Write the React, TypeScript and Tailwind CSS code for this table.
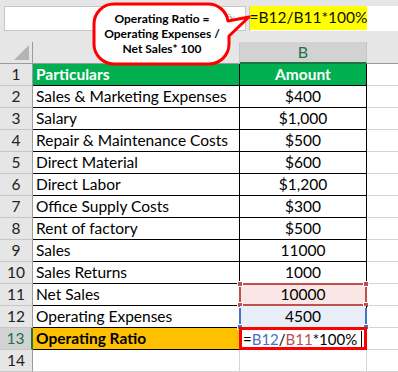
import React from "react";

const rows: { n: number; a: string; b: string }[] = [
  { n: 2, a: "Sales & Marketing Expenses", b: "$400" },
  { n: 3, a: "Salary", b: "$1,000" },
  { n: 4, a: "Repair & Maintenance Costs", b: "$500" },
  { n: 5, a: "Direct Material", b: "$600" },
  { n: 6, a: "Direct Labor", b: "$1,200" },
  { n: 7, a: "Office Supply Costs", b: "$300" },
  { n: 8, a: "Rent of factory", b: "$500" },
  { n: 9, a: "Sales", b: "11000" },
  { n: 10, a: "Sales Returns", b: "1000" },
];

function RowHead({ n, active }: { n: number; active?: boolean }) {
  return (
    <div
      className={
        active
          ? "w-[33px] shrink-0 flex items-center justify-center bg-[#d2d2d2] text-[#217346] border-r-2 border-r-[#217346] border-b border-b-[#c6c6c6]"
          : "w-[33px] shrink-0 flex items-center justify-center bg-[#e6e6e6] text-[#222] border-r border-r-[#9b9b9b] border-b border-b-[#c6c6c6]"
      }
    >
      {n}
    </div>
  );
}

function Handle({ pos, color }: { pos: string; color: string }) {
  return <div className={`absolute w-[6px] h-[6px] border border-white ${pos} ${color}`} />;
}

export default function App() {
  return (
    <div className="relative w-[398px] h-[372px] overflow-hidden bg-white text-[15.5px] leading-none text-black font-['Lato',sans-serif]">
      {/* formula bar strip */}
      <div className="h-[42px] bg-[#e6e6e6] flex items-start pt-[6px] gap-[3px] pl-[4px]">
        <div className="w-[242px] h-[25px] bg-white border border-[#c6c6c6] flex items-center justify-end pr-[10px]">
          <span className="text-[11px] italic text-[#9a9a9a] font-['DejaVu_Serif',serif]">fx</span>
        </div>
        <div className="flex-1 h-[25px] bg-white border-l border-[#c6c6c6]">
          <div className="w-[117px] h-[24px] bg-[#ffff00] flex items-center justify-center text-[15.5px] text-[#111]">
            =B12/B11*100%
          </div>
        </div>
      </div>

      {/* column headers */}
      <div className="flex h-[22px]">
        <div className="w-[33px] shrink-0 relative bg-[#e6e6e6] border-r border-[#9b9b9b] border-b border-b-[#9b9b9b]">
          <svg className="absolute right-[3px] bottom-[3px]" width="15" height="15">
            <polygon points="15,0 15,15 0,15" fill="#b4b4b4" />
          </svg>
        </div>
        <div className="w-[207px] shrink-0 bg-[#e6e6e6] border-r border-[#c6c6c6] border-b border-b-[#9b9b9b]" />
        <div className="w-[127px] shrink-0 bg-[#d2d2d2] border-r border-[#c6c6c6] border-b-2 border-b-[#217346] flex items-center justify-center text-[16px] text-[#217346]">
          B
        </div>
        <div className="flex-1 bg-[#e6e6e6] border-b border-b-[#9b9b9b]" />
      </div>

      {/* row 1 */}
      <div className="flex h-[22px]">
        <RowHead n={1} />
        <div className="w-[207px] shrink-0 bg-[#00b050] border-r border-b border-black px-[3px] flex items-center font-bold text-white">
          Particulars
        </div>
        <div className="w-[127px] shrink-0 bg-[#00b050] border-r border-b border-black flex items-center justify-center font-bold text-white">
          Amount
        </div>
        <div className="flex-1 border-b border-[#d4d4d4]" />
      </div>

      {rows.map((r) => (
        <div key={r.n} className="flex h-[22px]">
          <RowHead n={r.n} />
          <div className="w-[207px] shrink-0 border-r border-b border-black px-[3px] flex items-center">
            {r.a}
          </div>
          <div className="w-[127px] shrink-0 border-r border-b border-black flex items-center justify-center">
            {r.b}
          </div>
          <div className="flex-1 border-b border-[#d4d4d4]" />
        </div>
      ))}

      {/* row 11 */}
      <div className="flex h-[22px]">
        <RowHead n={11} />
        <div className="w-[207px] shrink-0 border-r border-b border-black px-[3px] flex items-center">
          Net Sales
        </div>
        <div className="w-[127px] shrink-0 relative bg-[#f9e6e5] border-r border-b border-black flex items-center justify-center">
          10000
          <div className="absolute -left-px -top-px -right-px -bottom-px border-2 border-[#c0504d]" />
          <Handle pos="-left-[3px] -top-[3px]" color="bg-[#c0504d]" />
          <Handle pos="-right-[3px] -top-[3px]" color="bg-[#c0504d]" />
          <Handle pos="-left-[3px] -bottom-[3px]" color="bg-[#c0504d]" />
          <Handle pos="-right-[3px] -bottom-[3px]" color="bg-[#c0504d]" />
        </div>
        <div className="flex-1 border-b border-[#d4d4d4]" />
      </div>

      {/* row 12 */}
      <div className="flex h-[22px]">
        <RowHead n={12} />
        <div className="w-[207px] shrink-0 border-r border-b border-black px-[3px] flex items-center">
          Operating Expenses
        </div>
        <div className="w-[127px] shrink-0 relative bg-[#e8eef8] border-r border-b border-black flex items-center justify-center">
          4500
          <div className="absolute -left-px top-[2px] -right-px -bottom-px border-x-2 border-[#4472c4]" />
          <Handle pos="-left-[3px] -bottom-[3px]" color="bg-[#4472c4]" />
          <Handle pos="-right-[3px] -bottom-[3px]" color="bg-[#4472c4]" />
        </div>
        <div className="flex-1 border-b border-[#d4d4d4]" />
      </div>

      {/* row 13 */}
      <div className="flex h-[22px]">
        <RowHead n={13} active />
        <div className="w-[207px] shrink-0 bg-[#ffc000] border-r border-b border-black px-[3px] flex items-center font-bold">
          Operating Ratio
        </div>
        <div className="w-[127px] shrink-0 relative flex items-center pl-[3px] text-[15px]">
          <div className="absolute -left-px -top-px right-0 bottom-0 border-[3px] border-[#ff0000]" />
          <span>=</span>
          <span className="text-[#4472c4]">B12</span>
          <span>/</span>
          <span className="text-[#c0504d]">B11</span>
          <span>*100%</span>
          <span className="ml-[4px] w-px h-[16px] bg-black" />
        </div>
        <div className="flex-1 border-b border-[#d4d4d4]" />
      </div>

      {/* row 14 */}
      <div className="flex h-[22px]">
        <RowHead n={14} />
        <div className="w-[207px] shrink-0 border-r border-b border-[#d4d4d4]" />
        <div className="w-[127px] shrink-0 border-r border-b border-[#d4d4d4]" />
        <div className="flex-1 border-b border-[#d4d4d4]" />
      </div>

      {/* callout */}
      <div className="absolute left-[92px] top-[2px] w-[160px] h-[66px]">
        <svg className="absolute inset-0" width="160" height="66">
          <path
            d="M22 2 H116 A20 20 0 0 1 136 19 L157 15 L137 34 V42 A20 20 0 0 1 117 62 H22 A20 20 0 0 1 2 42 V22 A20 20 0 0 1 22 2 Z"
            fill="white"
            stroke="#ff0000"
            strokeWidth="3"
            strokeLinejoin="round"
          />
        </svg>
        <div className="absolute left-[2px] top-[2px] w-[136px] h-[60px] flex flex-col items-center justify-center gap-[3px] text-[12px] font-bold">
          <span>Operating Ratio =</span>
          <span>Operating Expenses /</span>
          <span>Net Sales* 100</span>
        </div>
      </div>
    </div>
  );
}
